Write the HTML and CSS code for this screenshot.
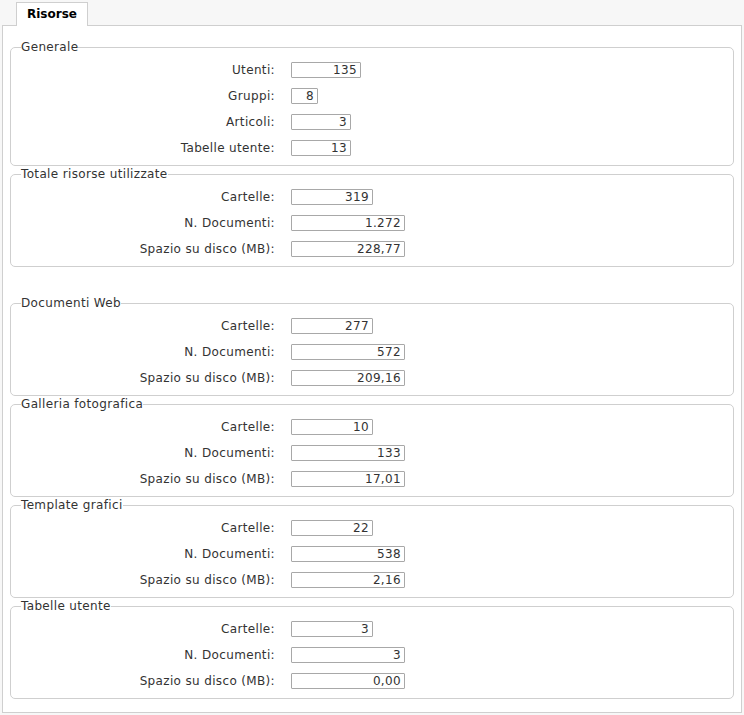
FILE: index.html
```html
<!DOCTYPE html>
<html lang="it">
<head>
<meta charset="utf-8">
<title>Risorse</title>
<link rel="stylesheet" href="styles.css">
</head>
<body>
<div class="tabs">
  <div class="tab">Risorse</div>
</div>
<div class="panel">
  <fieldset class="group">
    <legend>Generale</legend>
    <div class="row"><span class="lbl">Utenti:</span><span class="val w70">135</span></div>
    <div class="row"><span class="lbl">Gruppi:</span><span class="val w27">8</span></div>
    <div class="row"><span class="lbl">Articoli:</span><span class="val w60">3</span></div>
    <div class="row"><span class="lbl">Tabelle utente:</span><span class="val w60">13</span></div>
  </fieldset>
  <fieldset class="group">
    <legend>Totale risorse utilizzate</legend>
    <div class="row"><span class="lbl">Cartelle:</span><span class="val w82">319</span></div>
    <div class="row"><span class="lbl">N. Documenti:</span><span class="val w114">1.272</span></div>
    <div class="row"><span class="lbl">Spazio su disco (MB):</span><span class="val w114">228,77</span></div>
  </fieldset>
  <div class="spacer"></div>
  <fieldset class="group">
    <legend>Documenti Web</legend>
    <div class="row"><span class="lbl">Cartelle:</span><span class="val w82">277</span></div>
    <div class="row"><span class="lbl">N. Documenti:</span><span class="val w114">572</span></div>
    <div class="row"><span class="lbl">Spazio su disco (MB):</span><span class="val w114">209,16</span></div>
  </fieldset>
  <fieldset class="group">
    <legend>Galleria fotografica</legend>
    <div class="row"><span class="lbl">Cartelle:</span><span class="val w82">10</span></div>
    <div class="row"><span class="lbl">N. Documenti:</span><span class="val w114">133</span></div>
    <div class="row"><span class="lbl">Spazio su disco (MB):</span><span class="val w114">17,01</span></div>
  </fieldset>
  <fieldset class="group">
    <legend>Template grafici</legend>
    <div class="row"><span class="lbl">Cartelle:</span><span class="val w82">22</span></div>
    <div class="row"><span class="lbl">N. Documenti:</span><span class="val w114">538</span></div>
    <div class="row"><span class="lbl">Spazio su disco (MB):</span><span class="val w114">2,16</span></div>
  </fieldset>
  <fieldset class="group">
    <legend>Tabelle utente</legend>
    <div class="row"><span class="lbl">Cartelle:</span><span class="val w82">3</span></div>
    <div class="row"><span class="lbl">N. Documenti:</span><span class="val w114">3</span></div>
    <div class="row"><span class="lbl">Spazio su disco (MB):</span><span class="val w114">0,00</span></div>
  </fieldset>
</div>
</body>
</html>
```

FILE: styles.css
```css
html, body {
  margin: 0;
  padding: 0;
  background: #f7f7f7;
}

body {
  padding: 2px 2px 0 2px;
  font-family: "DejaVu Sans", Verdana, sans-serif;
  font-size: 12px;
  letter-spacing: 0.35px;
  color: #333;
}

.tabs {
  display: flex;
  padding-left: 14px;
  height: 23px;
  position: relative;
  z-index: 1;
}

.tab {
  width: 72px;
  box-sizing: border-box;
  border: 1px solid #cfcfcf;
  border-bottom: none;
  background: #fff;
  font-weight: bold;
  letter-spacing: 0;
  color: #000;
  text-align: center;
  line-height: 23px;
  height: 24px;
}

.panel {
  background: #fff;
  border: 1px solid #cfcfcf;
  padding: 14px 7px 14px 7px;
  height: 688px;
  box-sizing: border-box;
}

.group {
  margin: 0 0 1px 0;
  padding: 3px 10px 4px 10px;
  border: 1px solid #cfcfcf;
  border-radius: 5px;
  min-width: 0;
}

.group legend {
  padding: 0;
  line-height: 14px;
  color: #333;
}

.row {
  display: flex;
  align-items: center;
  height: 26px;
}

.lbl {
  width: 254px;
  text-align: right;
  padding-right: 16px;
  white-space: nowrap;
}

.val {
  box-sizing: border-box;
  height: 16px;
  line-height: 14px;
  border: 1px solid #a8a8a8;
  border-radius: 1px;
  text-align: right;
  padding-right: 3px;
  background: #fff;
}

.w27 { width: 27px; }
.w60 { width: 60px; }
.w70 { width: 70px; }
.w82 { width: 82px; }
.w114 { width: 114px; }

.spacer {
  height: 28px;
}
```
